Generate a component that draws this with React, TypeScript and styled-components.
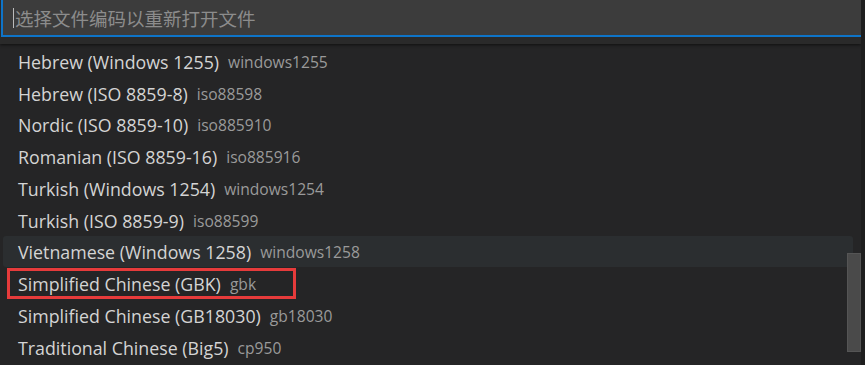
import styled, { createGlobalStyle } from "styled-components";

const GlobalStyle = createGlobalStyle`
body{
margin:0;
background:#1e1e1e;
font-family:"Open Sans","Noto Sans CJK SC",sans-serif;
overflow:hidden;
}
`

const Widget = styled.div /*style*/ `
position:relative;
width:861px;
height:365px;
background:#252526;
overflow:hidden;
`

const Header = styled.div /*style*/ `
height:46px;
padding-right:8px;
background:#2a2a2a;
box-shadow:0 1px 3px rgba(0,0,0,0.6);
position:relative;
z-index:1;
`

const InputBox = styled.div /*style*/ `
margin-top:-2px;
margin-left:1px;
height:35px;
width:848px;
background:#3c3c3c;
border:2px solid #0e74c8;
display:flex;
align-items:center;
padding-left:10px;
box-sizing:content-box;
`

const Caret = styled.span /*style*/ `
width:1px;
height:20px;
background:#bbbbbb;
margin-right:1px;
`

const Placeholder = styled.span /*style*/ `
font-family:"Noto Sans CJK SC",sans-serif;
font-size:18.5px;
color:#8c8c8c;
`

const List = styled.div /*style*/ `
display:flex;
flex-direction:column;
padding:1px 8px 0 3px;
`

const Row = styled.div<{ $focused?: boolean; $marked?: boolean }> /*style*/ `
position:relative;
height:31.75px;
display:flex;
align-items:center;
gap:9px;
padding-left:15px;
padding-top:2px;
box-sizing:border-box;
border-radius:3px;
background:${p => p.$focused ? "#2b2e30" : "transparent"};
${p => p.$marked && `
&::before{
content:"";
position:absolute;
left:4px;
top:1px;
width:289px;
height:31px;
border:3px solid #e63b3b;
box-sizing:border-box;
}
`}
`

const Label = styled.span /*style*/ `
font-size:17.8px;
font-weight:500;
color:#d4d4d4;
white-space:nowrap;
`

const Description = styled.span /*style*/ `
font-size:15.6px;
font-weight:500;
color:#9a9a9a;
white-space:nowrap;
`

const ScrollThumb = styled.div /*style*/ `
position:absolute;
right:0;
top:253px;
width:14px;
height:99px;
background:#4a4a4a;
border:1px solid #555;
box-sizing:border-box;
`

const items = [
  { label: "Hebrew (Windows 1255)", desc: "windows1255" },
  { label: "Hebrew (ISO 8859-8)", desc: "iso88598" },
  { label: "Nordic (ISO 8859-10)", desc: "iso885910" },
  { label: "Romanian (ISO 8859-16)", desc: "iso885916" },
  { label: "Turkish (Windows 1254)", desc: "windows1254" },
  { label: "Turkish (ISO 8859-9)", desc: "iso88599" },
  { label: "Vietnamese (Windows 1258)", desc: "windows1258", focused: true },
  { label: "Simplified Chinese (GBK)", desc: "gbk", marked: true },
  { label: "Simplified Chinese (GB18030)", desc: "gb18030" },
  { label: "Traditional Chinese (Big5)", desc: "cp950" },
]

const App: React.FC = () => {
  return (
    <>
      <GlobalStyle />
      <Widget>
        <Header>
          <InputBox>
            <Caret />
            <Placeholder>选择文件编码以重新打开文件</Placeholder>
          </InputBox>
        </Header>
        <List>
          {items.map(it => (
            <Row key={it.desc} $focused={it.focused} $marked={it.marked}>
              <Label>{it.label}</Label>
              <Description>{it.desc}</Description>
            </Row>
          ))}
        </List>
        <ScrollThumb />
      </Widget>
    </>
  )
}

export default App
